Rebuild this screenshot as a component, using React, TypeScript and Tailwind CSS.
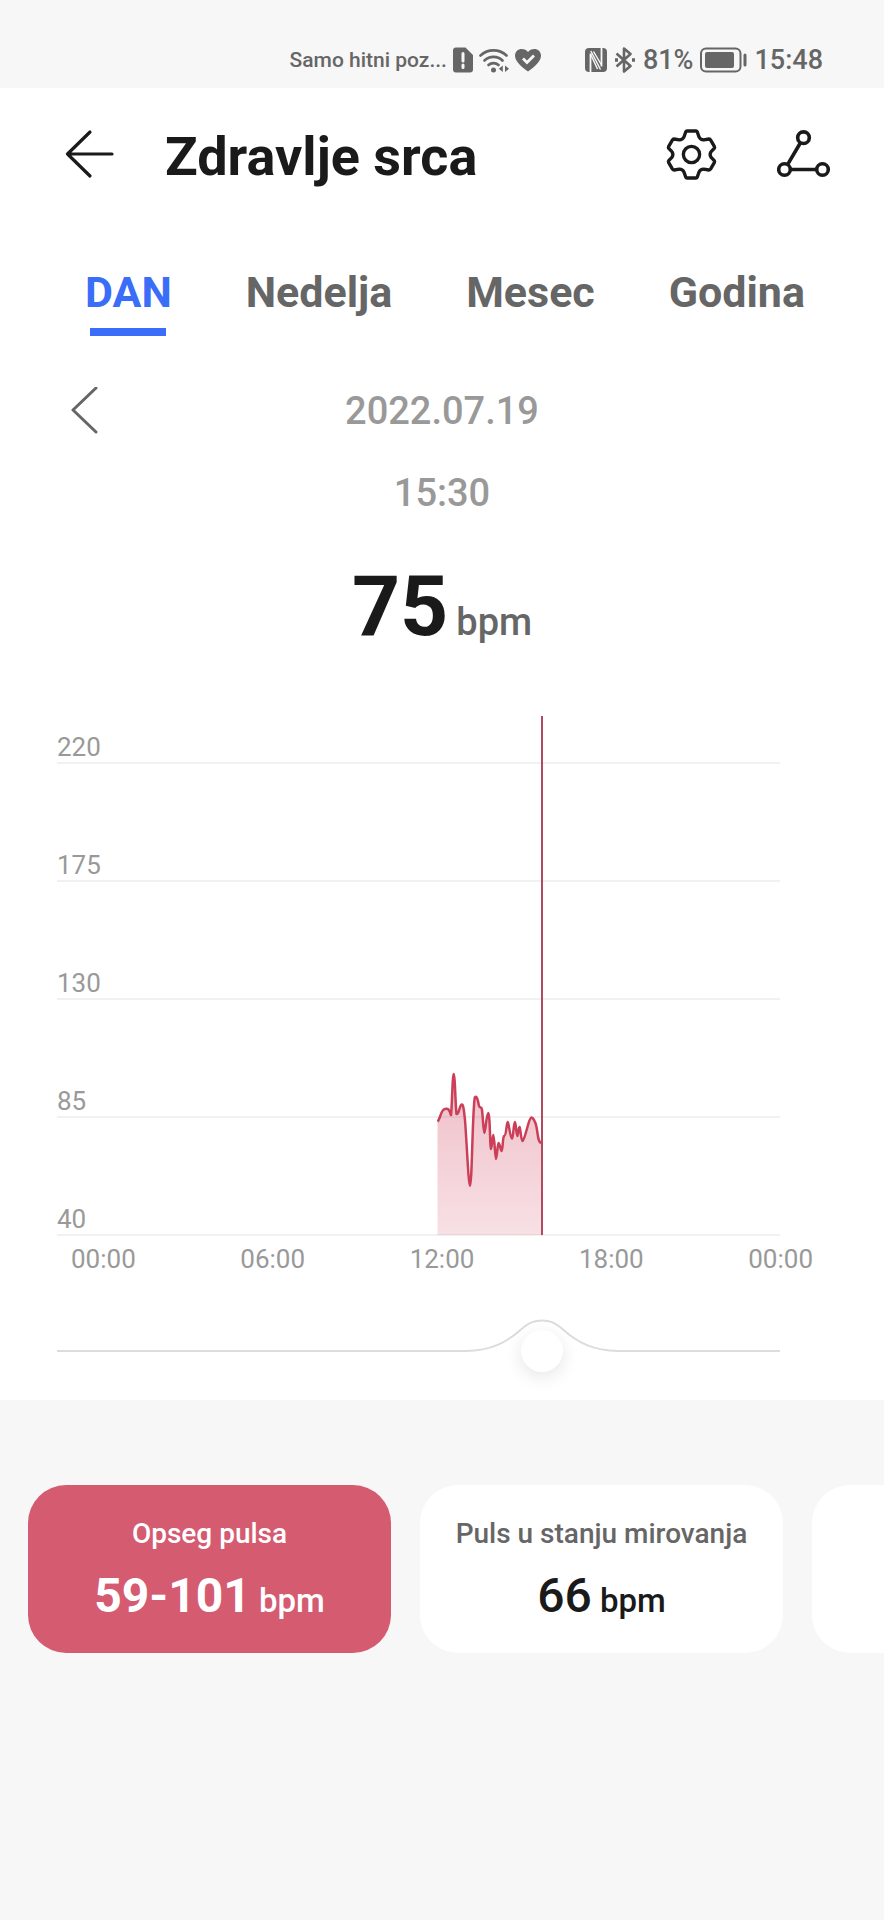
import { useState } from "react";

const TABS = ["DAN", "Nedelja", "Mesec", "Godina"];
const LEVELS = [175, 130, 85, 40];
const HOURS = ["00:00", "06:00", "12:00", "18:00", "00:00"];

const CURVE =
  "M380.5 405.5 C383 404 384 393 388 393 C391 392 392 393 394 399 C395 392 395.500 358 396.700 358 C398 358 398.500 392 399.500 398 C402 399 402.500 389 404.700 388.500 C406.500 388 407 396 408 404 C410 430 411.500 470 413 470 C415 470 415.500 392 417.800 381.500 C419.500 379 421 384 422 390 C423.500 393 424.500 390 425 394 C426 402 426.500 417 427.300 417 C428.500 417 429.300 398 431.300 397 C433 397 433 433 434 433 C435 433 435.300 419 436.300 419 C437.500 419 438 443 439 443 C440 443 440.500 427 441.500 427 C443 427 443.500 435 444.500 435 C446 434 445.500 422 447 420 C449.500 420 449.500 406 450.700 406 C452 407 453 422 455 422.500 C456.500 422 456.500 406 458 406 C459 406 459.300 420 460.300 420 C461 419 461.500 411 462.500 411 C463.500 412 464 425 465.500 425 C468.500 423 471.500 402 474.300 401.500 C476 402 478 404 479.500 411 C481 419 481 426 484 427";

function StatusBar() {
  return (
    <div className="flex h-[88px] items-center justify-end gap-[44px] pr-[61px] pt-8 text-[27px] font-medium leading-8 text-[#666]">
      <div className="flex items-center gap-[6px]">
        <span className="text-[21px]">Samo hitni poz...</span>
        <svg className="h-[26px] w-5" viewBox="0 0 20 26" fill="none">
          <path d="M3 .5h9.500L20 8v14.500a3 3 0 0 1-3 3H3a3 3 0 0 1-3-3v-19a3 3 0 0 1 3-3Z" fill="#666" />
          <path d="M10 6.500v7.500M10 18v2.500" stroke="#f7f7f7" strokeWidth="3" strokeLinecap="round" />
        </svg>
        <svg className="h-[26px] w-[30px]" viewBox="0 0 30 26" fill="none" stroke="#666">
          <path d="M1.500 8.500a19 19 0 0 1 26 0M5.500 13.500a13 13 0 0 1 18 0M9.500 18a7.500 7.500 0 0 1 10 0" strokeWidth="2.600" strokeLinecap="round" />
          <circle cx="14.500" cy="23" r="2.500" fill="#666" stroke="none" />
          <path d="M23.800 18.500v6.500l-4-3.200ZM26 18.500v6.500l4-3.200Z" fill="#666" stroke="none" />
        </svg>
        <svg className="h-6 w-[26px]" viewBox="0 0 26 24" fill="none">
          <path d="M13 23.500C9 20.500 0 14.500 0 7.800 0 3.600 3.100 1 6.700 1 9.500 1 11.500 2 13 4c1.500-2 3.500-3 6.300-3C22.900 1 26 3.600 26 7.800c0 6.700-9 12.700-13 15.700Z" fill="#666" />
          <path d="m8 10.500 4 4 7-7" stroke="#f7f7f7" strokeWidth="2.800" />
        </svg>
      </div>
      <div className="flex items-center gap-[7px]">
        <svg className="h-6 w-[22px]" viewBox="0 0 22 24" fill="none" stroke="#f7f7f7">
          <rect width="22" height="24" rx="4" fill="#666" stroke="none" />
          <path d="M5.500 24V5.500M16.500 0v18.500" strokeWidth="1.800" />
          <path d="M5.800 3 15.500 21.500M8.500 3.500 16.500 17M5.500 6l7 15" strokeWidth="1.400" />
        </svg>
        <svg className="h-[26px] w-[22px]" viewBox="0 0 22 26" fill="none" stroke="#666" strokeWidth="2.600" strokeLinejoin="round">
          <path d="m2.500 6.500 14 12.500-6.500 5.500v-23l6.500 5.500L2.500 19.500" />
          <path d="M2.500 11.200v3.600M19.500 11.200v3.600" strokeWidth="3" />
        </svg>
        <span>81%</span>
        <svg className="h-[26px] w-[47px]" viewBox="0 0 47 26" fill="none">
          <rect x="1" y="1.500" width="39.500" height="23" rx="5" stroke="#666" strokeWidth="2" />
          <rect x="5" y="5" width="29" height="16" rx="2" fill="#666" />
          <path d="M45 8v10" stroke="#666" strokeWidth="3" strokeLinecap="round" />
        </svg>
        <span>15:48</span>
      </div>
    </div>
  );
}

function Header() {
  return (
    <header className="flex h-[132px] items-center pl-16 pr-[51px] text-[#1a1a1a]">
      <button type="button" aria-label="Nazad">
        <svg className="h-[50px] w-[50px]" viewBox="0 0 50 50" fill="none" stroke="currentColor" strokeWidth="3.200" strokeLinecap="round" strokeLinejoin="round">
          <path d="M26 3 3.500 25 26 47M3.500 25H48" />
        </svg>
      </button>
      <h1 className="grow pl-[51px] pt-1.5 text-[54px] font-bold leading-[64px]">Zdravlje srca</h1>
      <button type="button" aria-label="Podešavanja">
        <svg className="h-[51px] w-[51px]" viewBox="0 0 52 52" fill="none" stroke="currentColor" strokeWidth="3.400" strokeLinejoin="round">
          <path d="M21.500 2h9q1 0 1.400 1l1.800 5.200q1.600 3 4.800 2.800l5.200-.8q1.200-.1 1.700.9l4 6.900q.5 1-.2 1.800l-3.400 3.600q-1.600 2.600 0 5.200l3.400 3.600q.7.800.2 1.800l-4 6.900q-.5 1-1.700.9l-5.200-.8q-3.200-.2-4.800 2.800l-1.800 5.200q-.4 1-1.400 1h-9q-1 0-1.400-1l-1.800-5.200q-1.600-3-4.800-2.800l-5.200.8q-1.200.1-1.700-.9l-4-6.900q-.5-1 .2-1.800l3.400-3.600q1.600-2.600 0-5.200l-3.400-3.600q-.7-.8-.2-1.800l4-6.900q.5-1 1.700-.9l5.200.8q3.200.2 4.800-2.800L20.100 3q.4-1 1.400-1Z" />
          <circle cx="26" cy="26" r="8.300" />
        </svg>
      </button>
      <button type="button" aria-label="Prikaz veza" className="ml-[60px]">
        <svg className="h-[52px] w-[56px]" viewBox="0 0 56 52" fill="none" stroke="currentColor" strokeWidth="3.600">
          <circle cx="26.500" cy="9.700" r="5.800" />
          <circle cx="7.500" cy="41.500" r="5.800" />
          <circle cx="45.500" cy="41.500" r="5.800" />
          <path d="M23.300 15 10.700 36.300M13.500 41.500h26" />
        </svg>
      </button>
    </header>
  );
}

function Chart() {
  return (
    <section>
      <div className="relative ml-[57px] mr-[104px] text-[26px] leading-[30px] text-[#999]">
        <div className="flex h-12 items-end border-b-2 border-[#f1f1f1]">220</div>
        {LEVELS.map((level) => (
          <div key={level} className="flex h-[118px] items-end border-b-2 border-[#f1f1f1]">
            {level}
          </div>
        ))}
        <svg className="absolute inset-0 h-full w-full" viewBox="0 0 723 520" preserveAspectRatio="none" fill="none">
          <defs>
            <linearGradient id="pulse" x1="0" y1="358" x2="0" y2="519" gradientUnits="userSpaceOnUse">
              <stop offset="0" stopColor="#d0405c" stopOpacity=".34" />
              <stop offset="1" stopColor="#d0405c" stopOpacity=".16" />
            </linearGradient>
          </defs>
          <path d={CURVE + " V519 H380.5 Z"} fill="url(#pulse)" />
          <path d={CURVE} stroke="#cb3f58" strokeWidth="2.500" strokeLinejoin="round" />
          <path d="M485 0V519" stroke="#b04a5e" strokeWidth="2" />
        </svg>
      </div>
      <div className="mt-[7px] flex justify-between px-[71px] text-[26px] leading-8 text-[#999]">
        {HOURS.map((hour, i) => (
          <span key={i}>{hour}</span>
        ))}
      </div>
    </section>
  );
}

function TimeSlider() {
  return (
    <div className="relative ml-[57px] mr-[104px] mt-[34px] flex h-[84px] items-center">
      <svg className="absolute inset-0 h-full w-full" viewBox="0 0 723 84" preserveAspectRatio="none" fill="none">
        <path
          d="M0 42H409C434 42 450 33 464 20.500C472 13.500 477 11.500 485 11.500C493 11.500 498 13.500 506 20.500C520 33 536 42 561 42H723"
          stroke="#dcdcdc"
          strokeWidth="2"
        />
      </svg>
      <input
        type="range"
        aria-label="Vreme"
        min={0}
        max={1440}
        step={2}
        defaultValue={934}
        className="relative -mr-[21px] ml-[25px] h-[42px] grow appearance-none bg-transparent [&::-webkit-slider-thumb]:h-[42px] [&::-webkit-slider-thumb]:w-[42px] [&::-webkit-slider-thumb]:appearance-none [&::-webkit-slider-thumb]:rounded-full [&::-webkit-slider-thumb]:bg-white [&::-webkit-slider-thumb]:shadow-[0_5px_18px_rgba(0,0,0,0.10)]"
      />
    </div>
  );
}

export default function App() {
  const [active, setActive] = useState("DAN");

  return (
    <div className="min-h-screen bg-[#f7f7f7] font-[Roboto,sans-serif]">
      <StatusBar />
      <main>
        <div className="bg-white pb-[7px]">
          <Header />
          <nav className="flex justify-between pl-[85px] pr-[79px] pt-[46px]">
            {TABS.map((tab) => (
              <button
                key={tab}
                type="button"
                onClick={() => setActive(tab)}
                className={
                  "flex flex-col items-center gap-2.5 text-[43px] font-bold leading-[52px] " +
                  (tab === active ? "text-[#3a6df8]" : "text-[#666]")
                }
              >
                {tab}
                <span className={"h-2 w-[76px] " + (tab === active ? "bg-[#3a6df8]" : "bg-transparent")} />
              </button>
            ))}
          </nav>
          <div className="mt-[34px] grid grid-cols-[64px_1fr_64px] items-center px-[52px] text-center text-[38px] font-medium leading-[82px] text-[#999]">
            <button type="button" aria-label="Prethodni dan" className="flex justify-center text-[#666]">
              <svg className="h-12 w-7" viewBox="0 0 28 48" fill="none" stroke="currentColor" strokeWidth="3" strokeLinecap="round" strokeLinejoin="round">
                <path d="M26 1 3 23 26 45" />
              </svg>
            </button>
            <p>2022.07.19</p>
          </div>
          <p className="text-center text-[38px] font-medium leading-[82px] text-[#999]">15:30</p>
          <p className="mb-[67px] mt-[31px] flex items-baseline justify-center gap-2 text-[84px] font-bold leading-[84px] text-[#1a1a1a]">
            75 <span className="text-[38px] font-medium leading-none text-[#666]">bpm</span>
          </p>
          <Chart />
          <TimeSlider />
        </div>
        <ul className="mt-[85px] flex gap-[29px] overflow-hidden pl-7 text-center">
          <li className="w-[363px] shrink-0 rounded-[38px] bg-[#d45b70] pb-[29px] pt-[33px] text-white">
            <h2 className="text-[28px] font-medium leading-8">Opseg pulsa</h2>
            <p className="mt-[18px] text-[48px] font-bold leading-[56px]">
              59-101<span className="text-[33px] font-medium leading-none"> bpm</span>
            </p>
          </li>
          <li className="w-[363px] shrink-0 rounded-[38px] bg-white pb-[29px] pt-[33px] text-[#1a1a1a]">
            <h2 className="text-[28px] font-medium leading-8 text-[#666]">Puls u stanju mirovanja</h2>
            <p className="mt-[18px] text-[48px] font-medium leading-[56px]">
              66<span className="text-[33px] leading-none"> bpm</span>
            </p>
          </li>
          <li className="w-[363px] shrink-0 rounded-[38px] bg-white" />
        </ul>
      </main>
    </div>
  );
}
